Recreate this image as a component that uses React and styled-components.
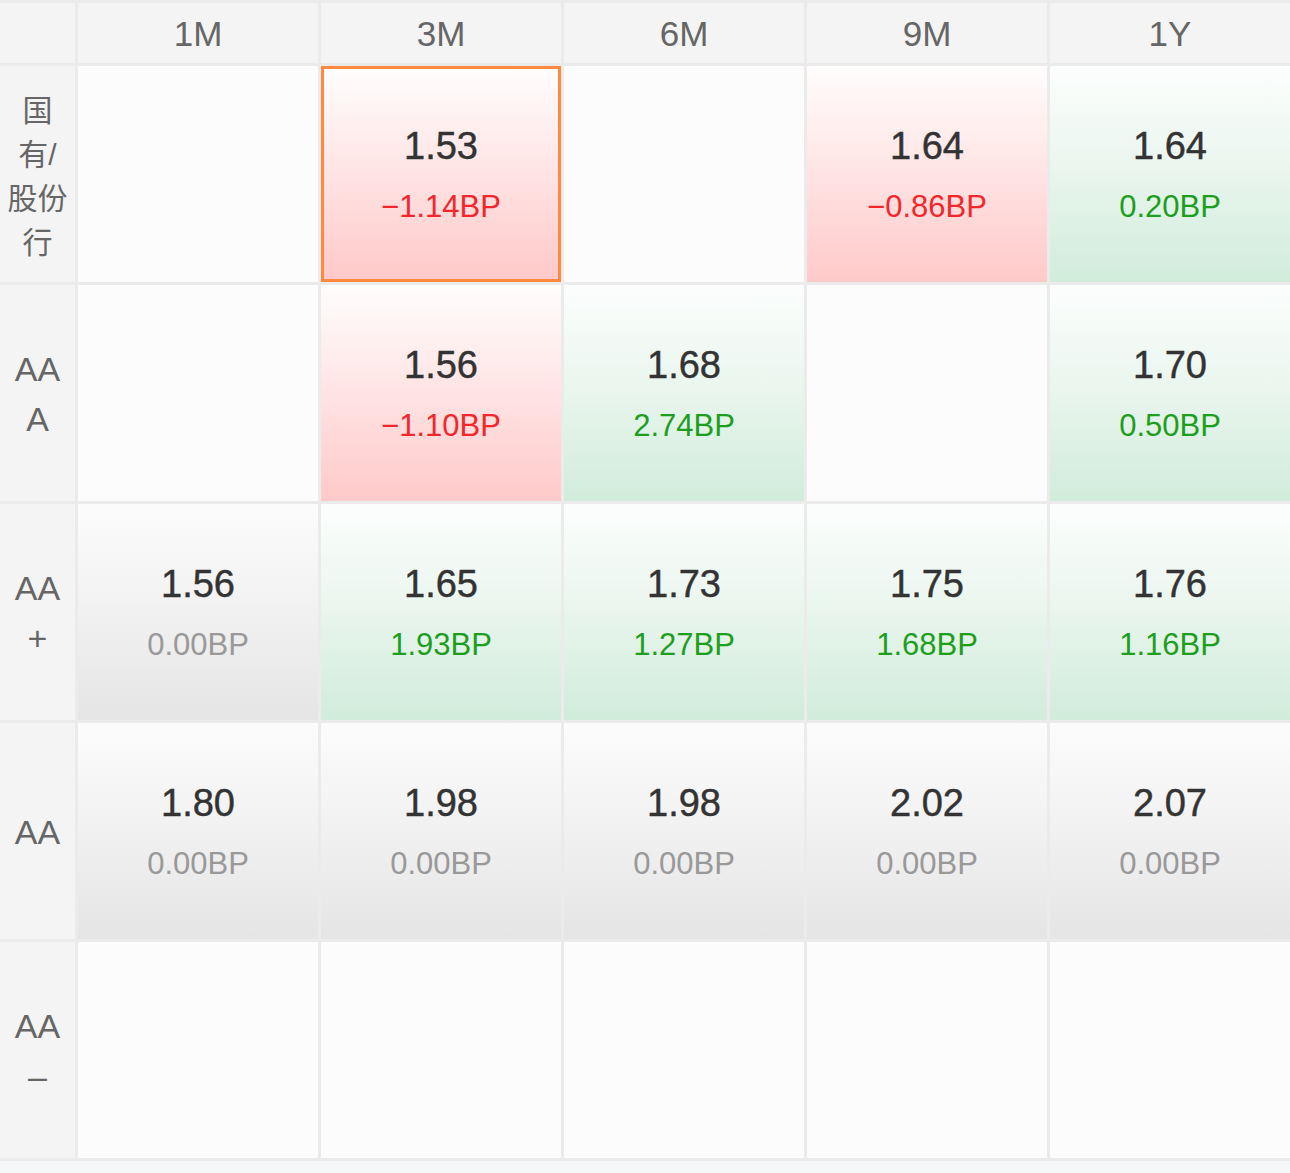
import React from 'react';
import styled, { createGlobalStyle, css } from 'styled-components';

const GlobalStyle = createGlobalStyle`
  html, body {
    margin: 0;
    padding: 0;
    background: #f6f7f9;
  }
  body {
    min-height: 1173px;
    font-family: "Liberation Sans", Arial, "Noto Sans CJK SC", sans-serif;
  }
`;

const tenors = ['1M', '3M', '6M', '9M', '1Y'];

const rows = [
  {
    label: ['国', '有/', '股份', '行'],
    cjk: true,
    cells: [null, { rate: '1.53', bp: -1.14, selected: true }, null, { rate: '1.64', bp: -0.86 }, { rate: '1.64', bp: 0.2 }],
  },
  {
    label: ['AA', 'A'],
    cells: [null, { rate: '1.56', bp: -1.1 }, { rate: '1.68', bp: 2.74 }, null, { rate: '1.70', bp: 0.5 }],
  },
  {
    label: ['AA', '+'],
    cells: [
      { rate: '1.56', bp: 0 },
      { rate: '1.65', bp: 1.93 },
      { rate: '1.73', bp: 1.27 },
      { rate: '1.75', bp: 1.68 },
      { rate: '1.76', bp: 1.16 },
    ],
  },
  {
    label: ['AA'],
    cells: [
      { rate: '1.80', bp: 0 },
      { rate: '1.98', bp: 0 },
      { rate: '1.98', bp: 0 },
      { rate: '2.02', bp: 0 },
      { rate: '2.07', bp: 0 },
    ],
  },
  {
    label: ['AA', '–'],
    cells: [null, null, null, null, null],
  },
];

const toneOf = (bp) => (bp < 0 ? 'down' : bp > 0 ? 'up' : 'flat');

const formatBp = (bp) => {
  const abs = Math.abs(bp).toFixed(2);
  return `${bp < 0 ? '−' : ''}${abs}BP`;
};

const backgrounds = {
  empty: '#fcfcfc',
  down: 'linear-gradient(to bottom, #fffdfd 0%, #ffe6e6 45%, #ffc9c9 100%)',
  up: 'linear-gradient(to bottom, #fcfefd 0%, #ebf6ef 45%, #d1ecdb 100%)',
  flat: 'linear-gradient(to bottom, #fcfcfc 0%, #f2f2f2 45%, #e5e5e5 100%)',
};

const bpColors = {
  down: '#f2262b',
  up: '#1d9f1d',
  flat: '#999999',
};

const Table = styled.div`
  display: grid;
  grid-template-columns: 75px repeat(5, 240px);
  grid-template-rows: 60px repeat(5, 216px);
  gap: 3px;
  padding: 3px 0;
  background: #ebebeb;
  width: 1290px;
`;

const Corner = styled.div`
  background: #f4f4f4;
`;

const HeadCell = styled.div`
  display: flex;
  align-items: center;
  justify-content: center;
  padding-top: 2px;
  background: #f4f4f4;
  color: #666;
  font-size: 35px;
`;

const RowLabel = styled.div`
  display: flex;
  flex-direction: column;
  align-items: center;
  justify-content: center;
  padding-top: ${(p) => (p.$cjk ? '6px' : '2px')};
  background: #f4f4f4;
  color: #666;
  font-size: ${(p) => (p.$cjk ? '30px' : '34px')};
  line-height: ${(p) => (p.$cjk ? '44px' : '50px')};
`;

const Cell = styled.div`
  box-sizing: border-box;
  display: flex;
  flex-direction: column;
  align-items: center;
  justify-content: center;
  gap: 19px;
  padding-top: 2px;
  background: ${(p) => backgrounds[p.$tone]};
  ${(p) =>
    p.$selected &&
    css`
      border: 3px solid #ff8a3d;
    `}
`;

const Rate = styled.div`
  font-size: 38px;
  color: #333;
  line-height: 44px;
  -webkit-text-stroke: 0.45px #333;
`;

const Bp = styled.div`
  font-size: 31px;
  color: ${(p) => bpColors[p.$tone]};
  line-height: 40px;
`;

export default function App() {
  return (
    <>
      <GlobalStyle />
      <Table>
        <Corner />
        {tenors.map((t) => (
          <HeadCell key={t}>{t}</HeadCell>
        ))}
        {rows.map((row, r) => (
          <React.Fragment key={r}>
            <RowLabel $cjk={row.cjk}>
              {row.label.map((line, i) => (
                <span key={i}>{line}</span>
              ))}
            </RowLabel>
            {row.cells.map((cell, c) => {
              if (!cell) return <Cell key={c} $tone="empty" />;
              const tone = toneOf(cell.bp);
              return (
                <Cell key={c} $tone={tone} $selected={cell.selected}>
                  <Rate>{cell.rate}</Rate>
                  <Bp $tone={tone}>{formatBp(cell.bp)}</Bp>
                </Cell>
              );
            })}
          </React.Fragment>
        ))}
      </Table>
    </>
  );
}
